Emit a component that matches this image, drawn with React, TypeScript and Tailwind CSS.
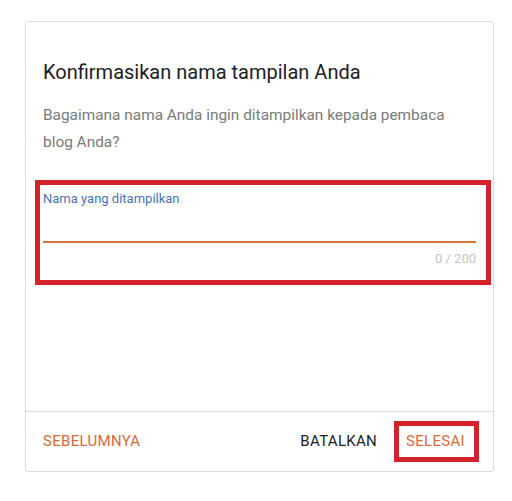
import React from "react";

export default function App() {
  return (
    <div
      className="w-[512px] h-[501px] bg-white pt-[21px] pl-[25px]"
      style={{ fontFamily: "Roboto, 'Noto Sans', sans-serif" }}
    >
      <div className="w-[469px] h-[451px] border border-[#dadce0] rounded-[3px] flex flex-col">
        <div className="flex-1 pt-[37px] pl-[9px] pr-[2px]">
          <h1 className="pl-[8px] text-[20px] leading-[26px] text-[#202124] font-normal">
            Konfirmasikan nama tampilan Anda
          </h1>
          <p className="pl-[8px] mt-[17px] text-[15.4px] leading-[27px] text-[#7a7a7a] pr-[30px]">
            Bagaimana nama Anda ingin ditampilkan kepada pembaca blog Anda?
          </p>
          <div className="mt-[24px] border-[5px] border-[#d3222a] pl-[3px] pr-[10px] pt-[6px] pb-[13px]">
            <div className="text-[13px] leading-[16px] text-[#4a72b8]">
              Nama yang ditampilkan
            </div>
            <div className="mt-[34px] h-[2px] bg-[#d4763e]" />
            <div className="mt-[8px] text-right text-[13px] leading-[16px] text-[#c4c4c4]">
              0 / 200
            </div>
          </div>
        </div>
        <div className="h-px bg-[#dadce0]" />
        <div className="h-[59px] flex items-center pl-[17px] pr-[14px]">
          <span className="text-[15px] font-normal text-[#d66a3c] tracking-[0.3px]">
            SEBELUMNYA
          </span>
          <span className="ml-auto text-[15px] font-normal text-[#202124] tracking-[0.3px]">
            BATALKAN
          </span>
          <span className="ml-[17px] border-[5px] border-[#d3222a] h-[41px] pl-[7px] pr-[9px] flex items-center text-[15px] font-normal text-[#d66a3c] tracking-[0.3px]">
            SELESAI
          </span>
        </div>
      </div>
    </div>
  );
}
